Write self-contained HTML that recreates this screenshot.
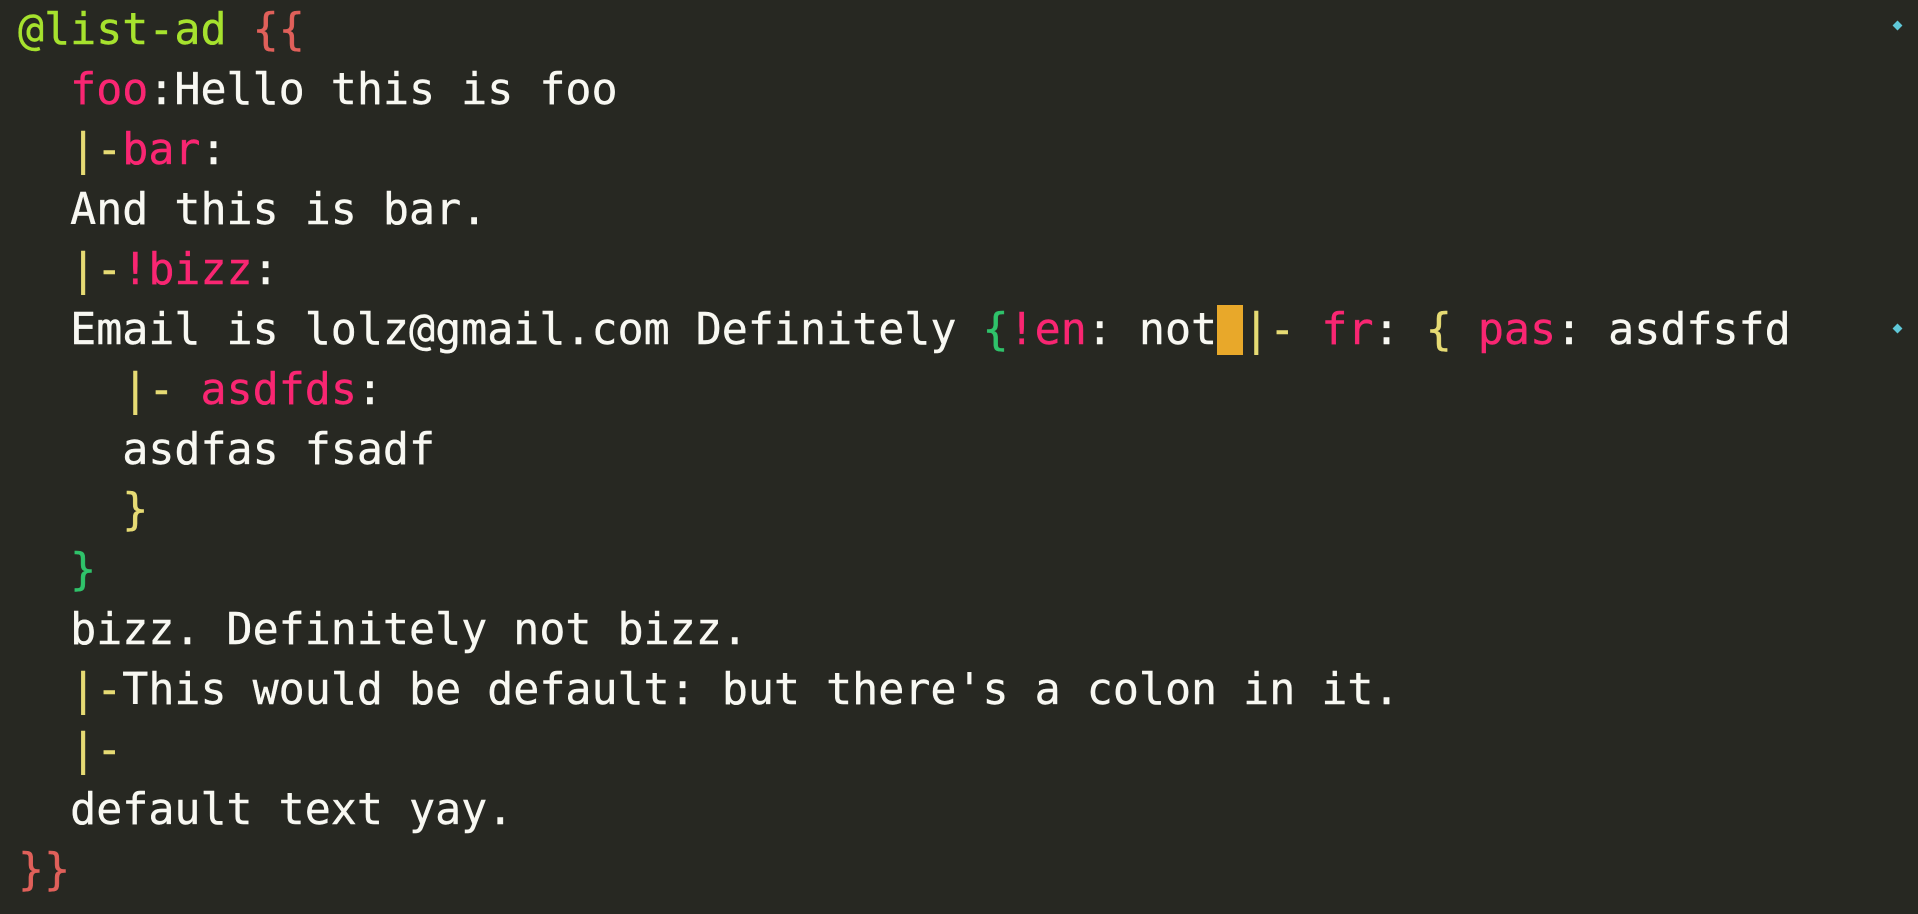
<!DOCTYPE html>
<html><head><meta charset="utf-8"><style>
html,body{margin:0;padding:0;background:#272822;width:1918px;height:914px;overflow:hidden}
pre{margin:0;position:absolute;left:18px;top:0;font-family:"DejaVu Sans Mono","Liberation Mono",monospace;font-size:43.3px;line-height:60px;color:#f8f8f2;-webkit-text-stroke:0.4px currentColor}
.g{color:#a6e22e}.r{color:#e0605a}.p{color:#f92672}.y{color:#e6db74}.gb{color:#2fc26a}
.cur{background:#e8a82a}
.d{position:absolute;width:7px;height:7px;background:#5fc8d8;transform:rotate(45deg)}
</style></head><body>
<pre><span class="g">@list-ad</span> <span class="r">{{</span>
  <span class="p">foo</span>:Hello this is foo
  <span class="y">|-</span><span class="p">bar</span>:
  And this is bar.
  <span class="y">|-</span><span class="p">!bizz</span>:
  Email is lolz@gmail.com Definitely <span class="gb">{</span><span class="p">!en</span>: not<span class="cur"> </span><span class="y">|-</span> <span class="p">fr</span>: <span class="y">{</span> <span class="p">pas</span>: asdfsfd
    <span class="y">|-</span> <span class="p">asdfds</span>:
    asdfas fsadf
    <span class="y">}</span>
  <span class="gb">}</span>
  bizz. Definitely not bizz.
  <span class="y">|-</span>This would be default: but there's a colon in it.
  <span class="y">|-</span>
  default text yay.
<span class="r">}}</span></pre>
<div class="d" style="left:1894px;top:22px"></div>
<div class="d" style="left:1894px;top:325px"></div>
</body></html>
